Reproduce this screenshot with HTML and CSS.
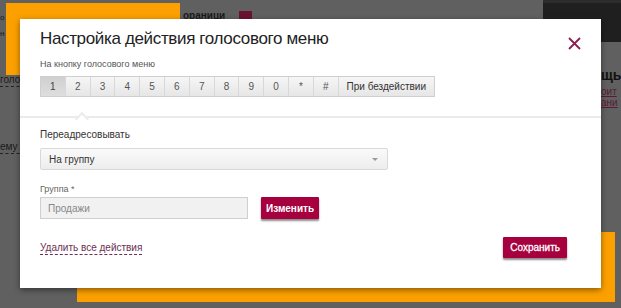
FILE: index.html
```html
<!DOCTYPE html>
<html lang="ru">
<head>
<meta charset="utf-8">
<title>Настройка действия голосового меню</title>
<link rel="stylesheet" href="styles.css">
</head>
<body>
<div class="page">
  <div class="bg-dark"></div>
  <div class="bg-orange-top"></div>
  <div class="bg-orange-bottom"></div>
  <span class="bg-text bg-t1">о</span>
  <span class="bg-text bg-t2">н</span>
  <span class="bg-text bg-t3 dashed">голос</span>
  <span class="bg-text bg-t4 dashed">ему с</span>
  <span class="bg-text bg-t5">ораници</span>
  <span class="bg-square"></span>
  <span class="bg-text bg-t6">щь</span>
  <span class="bg-text bg-t7">оит</span>
  <span class="bg-text bg-t8">ани</span>

  <div class="modal">
    <div class="modal-head">
      <h1 class="title">Настройка действия голосового меню</h1>
      <button class="close" aria-label="Закрыть">
        <svg width="13" height="13" viewBox="0 0 13 13"><path d="M1 1 L12 12 M12 1 L1 12" stroke="#8c1f50" stroke-width="1.8" fill="none"/></svg>
      </button>
      <div class="sub">На кнопку голосового меню</div>
      <div class="tabs">
        <span class="tab active">1</span>
        <span class="tab">2</span>
        <span class="tab">3</span>
        <span class="tab">4</span>
        <span class="tab">5</span>
        <span class="tab">6</span>
        <span class="tab">7</span>
        <span class="tab">8</span>
        <span class="tab">9</span>
        <span class="tab">0</span>
        <span class="tab">*</span>
        <span class="tab">#</span>
        <span class="tab wide">При бездействии</span>
      </div>
      <span class="caret"></span>
    </div>
    <div class="modal-body">
      <div class="label">Переадресовывать</div>
      <div class="select">
        <span>На группу</span>
        <span class="arrow"></span>
      </div>
      <div class="label small">Группа *</div>
      <div class="row">
        <div class="input">Продажи</div>
        <button class="btn">Изменить</button>
      </div>
    </div>
    <div class="modal-foot">
      <a class="link" href="#">Удалить все действия</a>
      <button class="btn save">Сохранить</button>
    </div>
  </div>
</div>
</body>
</html>
```

FILE: styles.css
```css
* { box-sizing: border-box; }
html, body { margin: 0; padding: 0; }
body {
  font-family: "Liberation Sans", Arial, sans-serif;
  background: #5f5f5f;
}
.page {
  position: relative;
  width: 621px;
  height: 308px;
  overflow: hidden;
  background: #606060;
}
.bg-dark {
  position: absolute;
  left: 543px; top: 0;
  width: 78px; height: 42px;
  background: #1f1f1f;
  border-top: 3px solid #2c2c2c;
}
.bg-orange-top {
  position: absolute;
  left: 6px; top: 3px;
  width: 174px; height: 72px;
  background: #fca000;
}
.bg-orange-bottom {
  position: absolute;
  left: 77px; top: 232px;
  width: 538px; height: 70px;
  background: #fca000;
}
.bg-text {
  position: absolute;
  font-size: 10px;
  color: #1a1a1a;
  line-height: 12px;
}
.dashed { border-bottom: 1px dashed #222; }
.bg-t1 { left: 0; top: 12px; font-size: 8px; }
.bg-t2 { left: 0; top: 28px; font-size: 8px; }
.bg-t3 { left: 0; top: 74px; }
.bg-t4 { left: 0; top: 141px; }
.bg-t5 { left: 183px; top: 10px; font-weight: bold; font-size: 10px; text-decoration: underline; }
.bg-square {
  position: absolute;
  left: 239px; top: 11px;
  width: 13px; height: 10px;
  background: #6a1331;
}
.bg-t6 { left: 601px; top: 67px; font-size: 14px; line-height: 16px; font-weight: bold; color: #111; }
.bg-t7 { left: 601px; top: 86px; color: #5a1a35; text-decoration: underline; }
.bg-t8 { left: 601px; top: 97px; color: #5a1a35; text-decoration: underline; }

.modal {
  position: absolute;
  left: 20px; top: 19px;
  width: 581px; height: 269px;
  background: #fff;
  box-shadow: 0 2px 6px rgba(0,0,0,0.45);
  display: flex;
  flex-direction: column;
}
.modal-head {
  position: relative;
  padding: 9px 20px 19px;
  border-bottom: 2px solid #ebebeb;
}
.title {
  margin: 0;
  font-weight: normal;
  font-size: 17px;
  letter-spacing: -0.35px;
  line-height: 22px;
  color: #222;
}
.close {
  position: absolute;
  right: 20px; top: 18px;
  width: 13px; height: 13px;
  padding: 0; border: 0; background: none;
  display: block;
}
.close svg { display: block; }
.sub {
  margin-top: 8px;
  font-size: 9px;
  line-height: 12px;
  color: #555;
}
.tabs {
  margin-top: 6px;
  display: flex;
  width: 395px;
  height: 21px;
  border: 1px solid #cfcfcf;
  background: linear-gradient(#f6f6f6, #e6e6e6);
}
.tab {
  flex: 0 0 24.8px;
  display: flex;
  align-items: center;
  justify-content: center;
  font-size: 10px;
  color: #555;
  border-right: 1px solid #d8d8d8;
}
.tab.active {
  background: linear-gradient(#d0d0d0, #dedede);
  color: #444;
}
.tab.wide {
  flex: 1 1 auto;
  border-right: 0;
  color: #333;
}
.caret {
  position: absolute;
  left: 57px; bottom: -2px;
  width: 10px; height: 10px;
  background: #fff;
  border-left: 2px solid #ebebeb;
  border-top: 2px solid #ebebeb;
  transform: translateY(6px) rotate(45deg);
}
.modal-body {
  padding: 10px 20px 0;
}
.label {
  font-size: 10px;
  line-height: 14px;
  color: #333;
}
.label.small {
  margin-top: 13px;
  font-size: 9px;
  line-height: 12px;
  color: #666;
}
.select {
  margin-top: 6px;
  width: 348px;
  height: 22px;
  border: 1px solid #d9d9d9;
  border-radius: 2px;
  background: linear-gradient(#fafafa, #ededed);
  display: flex;
  align-items: center;
  justify-content: space-between;
  padding: 0 9px 0 8px;
  font-size: 10px;
  color: #333;
}
.arrow {
  width: 0; height: 0;
  border-left: 3px solid transparent;
  border-right: 3px solid transparent;
  border-top: 3px solid #999;
}
.row {
  margin-top: 2px;
  display: flex;
  align-items: flex-start;
  gap: 13px;
}
.input {
  width: 208px;
  height: 22px;
  border: 1px solid #cfcfcf;
  background: #f1f1f1;
  font-size: 10px;
  color: #888;
  display: flex;
  align-items: center;
  padding-left: 7px;
}
.btn {
  height: 22px;
  padding: 0 5px;
  border: 0;
  border-radius: 1px;
  background: #a6003f;
  color: #fff;
  font-family: "Liberation Sans", Arial, sans-serif;
  font-size: 10px;
  font-weight: bold;
  box-shadow: 0 2px 2px rgba(0,0,0,0.45);
  cursor: pointer;
}
.modal-foot {
  margin-top: auto;
  padding: 0 34px 30px 20px;
  display: flex;
  justify-content: space-between;
  align-items: center;
}
.link {
  font-size: 10px;
  line-height: 13px;
  color: #6d2e54;
  text-decoration: none;
  border-bottom: 1px dashed #6d2e54;
}
.save {
  height: 21px;
  padding: 0 7px;
  font-weight: normal;
  -webkit-text-stroke: 0.3px #fff;
}
```
